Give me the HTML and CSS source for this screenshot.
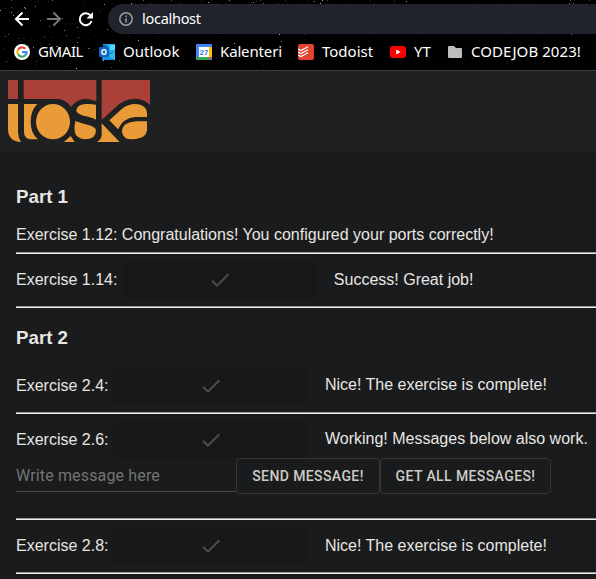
FILE: index.html
```html
<!DOCTYPE html>
<html lang="en">
<head>
<meta charset="utf-8">
<title>localhost</title>
<link rel="stylesheet" href="styles.css">
</head>
<body>
<div class="chrome">
  <svg class="stars" width="596" height="70" fill="#fff">
    <g id="stars"></g>
  </svg>
  <div class="toolbar">
    <svg class="nav" width="100" height="30" viewBox="0 4 100 30" fill="none" stroke="#fff" stroke-width="2">
      <path d="M29 19H16.500M22.500 12.500L16 19l6.500 6.500"/>
      <path stroke="#777" d="M47 19h12.500M53.500 12.500L60 19l-6.500 6.500"/>
      <path d="M90.500 15.500A6 6 0 1 0 91.500 21"/>
      <path fill="#fff" stroke="none" d="M93 12v6.500h-6.500z"/>
    </svg>
    <div class="address">
      <svg width="14" height="14" fill="none" stroke="#9a9da2" stroke-width="1.500"><circle cx="7" cy="7" r="6.200"/><path d="M7 6.200v4.300M7 3.500v1.500"/></svg>
      <span>localhost</span>
    </div>
  </div>
  <div class="bookmarks">
    <svg class="ic gmail" width="16" height="16"><circle cx="8" cy="8" r="8" fill="#fff"/><g fill="none" stroke-width="2.200"><path stroke="#ea4335" d="M4 5.700A4.600 4.600 0 0 1 11.300 4.800"/><path stroke="#fbbc05" d="M4 5.700a4.600 4.600 0 0 0 0 4.600"/><path stroke="#34a853" d="M4 10.300a4.600 4.600 0 0 0 7 1.200"/><path stroke="#4285f4" d="M11 11.500a4.600 4.600 0 0 0 1.600-3.300H8"/></g></svg>
    <span class="bm b1">GMAIL</span>
    <svg class="ic outlook" width="16" height="16"><path fill="#28a8ea" d="M4 0h12v9H4z"/><path fill="#0a5fb0" d="M4 1h4v5H4z"/><path fill="#50d9ff" d="M11 1h5v5h-5z"/><path fill="#1490df" d="M3 9l13-1v8H3z"/><path fill="#35b8f1" d="M16 8v8L9 12z"/><rect y="3" width="10" height="10" rx="1" fill="#0f65bd"/><ellipse cx="5" cy="8" rx="2.100" ry="2.400" fill="none" stroke="#fff" stroke-width="1.400"/></svg>
    <span class="bm b2">Outlook</span>
    <svg class="ic cal" width="16" height="16"><rect width="16" height="16" rx="1" fill="#4285f4"/><path fill="#fbbc04" d="M13 3h3v10h-3z"/><path fill="#34a853" d="M0 13h13v3H1l-1-1z"/><path fill="#ea4335" d="M13 13h3l-3 3z"/><path fill="#fff" d="M3 3h10v10H3z"/><text x="8" y="11" text-anchor="middle" class="day">27</text></svg>
    <span class="bm b3">Kalenteri</span>
    <svg class="ic todo" width="16" height="16"><rect width="16" height="16" rx="2" fill="#e44332"/><path fill="none" stroke="#fff" stroke-width="1.200" d="M0 5l3 1.500L10 2.800M0 8l3 1.500L10 5.800M0 11l3 1.500L10 8.800"/></svg>
    <span class="bm b4">Todoist</span>
    <svg class="ic yt" width="16" height="12"><rect width="16" height="12" rx="3" fill="#f00"/><path fill="#fff" d="M6.200 3.500v5l4.500-2.500z"/></svg>
    <span class="bm b5">YT</span>
    <svg class="ic folder" width="14" height="12"><path fill="#bdbdbd" d="M1 0h5l2 2h5q1 0 1 1v8q0 1-1 1H1q-1 0-1-1V1q0-1 1-1z"/></svg>
    <span class="bm b6">CODEJOB 2023!</span>
  </div>
</div>
<header class="header">
  <svg class="logo" width="142" height="62" viewBox="24 30 426 186">
    <g fill="#a94138">
      <path d="M24 30H54V87H24z"/>
      <path d="M71 30H289V94Q272 86 255 86Q230 88 213 111Q195 86 170 87H71z"/>
      <path d="M305 30H450V105Q430 86 405 86Q378 86 355 104L305 150z"/>
    </g>
    <g fill="#e99b38">
      <path d="M24 102H54V187Q55 205 63 216Q26 214 24 180z"/>
      <path d="M72 102H112Q92 122 92 155Q92 190 114 208H92Q72 206 72 185z"/>
      <ellipse cx="159" cy="155" rx="51" ry="53"/>
      <path d="M192 216L212 198L224 216z"/>
      <path d="M288 104V149Q275 141 250 137Q229 131 229 121Q231 103 258 102Q275 101 288 104z"/>
      <path d="M226 153Q245 160 262 164Q286 170 288 180Q288 207 258 208Q228 206 224 185Q222 168 226 153z"/>
      <path d="M291 216Q304 208 305 195V160L359 216z"/>
      <path d="M328 151L366 116Q385 102 405 102Q441 104 441 132V141H405Q368 145 354 178z"/>
      <path d="M441 154H410Q366 157 366 185Q368 208 398 208Q441 206 441 178z"/>
    </g>
  </svg>
</header>
<main class="content">
  <h3>Part 1</h3>
  <div class="line">Exercise 1.12: Congratulations! You configured your ports correctly!</div>
  <hr>
  <div class="row"><span>Exercise 1.14:</span><div class="result"><svg class="check" viewBox="0 0 24 24"><path d="M9 16.170L4.830 12l-1.420 1.410L9 19 21 7l-1.410-1.410z"/></svg></div><span>Success! Great job!</span></div>
  <hr>
  <h3 class="second">Part 2</h3>
  <div class="row"><span>Exercise 2.4:</span><div class="result"><svg class="check" viewBox="0 0 24 24"><path d="M9 16.170L4.830 12l-1.420 1.410L9 19 21 7l-1.410-1.410z"/></svg></div><span class="raised">Nice! The exercise is complete!</span></div>
  <hr>
  <div class="row"><span>Exercise 2.6:</span><div class="result"><svg class="check" viewBox="0 0 24 24"><path d="M9 16.170L4.830 12l-1.420 1.410L9 19 21 7l-1.410-1.410z"/></svg></div><span class="raised">Working! Messages below also work.</span></div>
  <div class="form"><input type="text" placeholder="Write message here"><button class="send">SEND MESSAGE!</button><button class="get">GET ALL MESSAGES!</button></div>
  <hr>
  <div class="row"><span>Exercise 2.8:</span><div class="result"><svg class="check" viewBox="0 0 24 24"><path d="M9 16.170L4.830 12l-1.420 1.410L9 19 21 7l-1.410-1.410z"/></svg></div><span>Nice! The exercise is complete!</span></div>
  <hr>
</main>
<script src="stars.js"></script>
</body>
</html>
```
FILE: styles.css
```css
* { box-sizing: border-box; }
body { margin: 0; height: 579px; overflow: hidden; background: #191b1c; color: #e8e6e3; font: 16px/18px "Liberation Sans", Arial, sans-serif; }
.chrome { position: relative; height: 71px; background: #000; border-bottom: 1px solid #3b3e43; font-family: "Noto Sans", sans-serif; color: #fff; overflow: hidden; }
.stars { position: absolute; left: 0; top: 0; }
.toolbar { position: relative; display: flex; height: 34px; padding-top: 4px; }
.nav { flex: none; }
.address { display: flex; align-items: center; gap: 9px; flex: 1; height: 30px; margin-left: 8px; padding-left: 11px; border-radius: 15px 0 0 15px; background: #20232b; font-size: 14.500px; }
.address span { margin-top: -2px; letter-spacing: -0.280px; }
.bookmarks { position: relative; display: flex; align-items: center; height: 36px; padding-left: 14px; font-size: 15px; line-height: 20px; white-space: nowrap; }
.ic { flex: none; }
.bm { flex: none; margin: -2px 0 0 8px; }
.b1 { width: 61px; letter-spacing: -0.400px; }
.b2 { width: 73px; }
.b3 { width: 78px; letter-spacing: -0.150px; }
.b4 { width: 68px; }
.b5 { width: 34px; }
.b6 { margin-left: 9px; letter-spacing: 0.080px; }
.day { font: bold 8px "Liberation Sans", sans-serif; fill: #3474df; }
.header { height: 80px; padding: 9px 8px; background: #1e2021; }
.logo { display: block; }
.content { padding-left: 16px; }
h3 { margin: 0; padding-top: 35px; height: 75px; font-size: 18.720px; line-height: 21px; }
h3.second { padding-top: 11px; height: 52px; }
.line { height: 18px; }
hr { height: 2px; margin: 8px 0; border: 0; border-top: 1px solid #9a9a9a; border-bottom: 1px solid #eee; }
.row { display: flex; align-items: center; height: 36px; white-space: nowrap; }
.raised { margin-top: -2px; }
.result { display: flex; flex: none; align-items: center; justify-content: center; width: 196px; height: 36px; margin: 0 16px 0 4.450px; border-radius: 4px; background: #171819; }
.check { width: 24px; height: 24px; fill: #4b4c4d; }
.form { display: flex; height: 52px; }
.form input { width: 220px; height: 34px; padding: 2px 0 0; border: 0; border-bottom: 1px solid #4b4a45; outline: 0; background: transparent; font: 16px Roboto, sans-serif; letter-spacing: 0.150px; }
.form input::placeholder { color: #747474; opacity: 1; }
.form button { height: 36px; padding: 0; border: 1px solid #363735; border-radius: 4px; background: transparent; color: #cecbc6; font: 500 14px Roboto, sans-serif; letter-spacing: 0.400px; }
.send { width: 144px; }
.get { width: 171px; }
```
FILE: stars.js
```js
// Scatter a fixed star field behind the toolbar; denser on the left.
const ns = "http://www.w3.org/2000/svg";
let seed = 27;
const rand = () => (seed = (seed * 16807) % 2147483647) / 2147483647;
const field = document.getElementById("stars");
for (let i = 0; i < 360; i++) {
  const s = document.createElementNS(ns, "rect");
  const top = i % 4 === 0;
  s.setAttribute("x", Math.floor(rand() * (top ? 596 : 130 + 466 * (i % 3 === 0))));
  s.setAttribute("y", Math.floor(rand() * (top ? 4 : 70)));
  s.setAttribute("width", 1);
  s.setAttribute("height", 1);
  s.setAttribute("opacity", (0.05 + Math.pow(rand(), 6) * 0.7).toFixed(2));
  field.appendChild(s);
}
```
